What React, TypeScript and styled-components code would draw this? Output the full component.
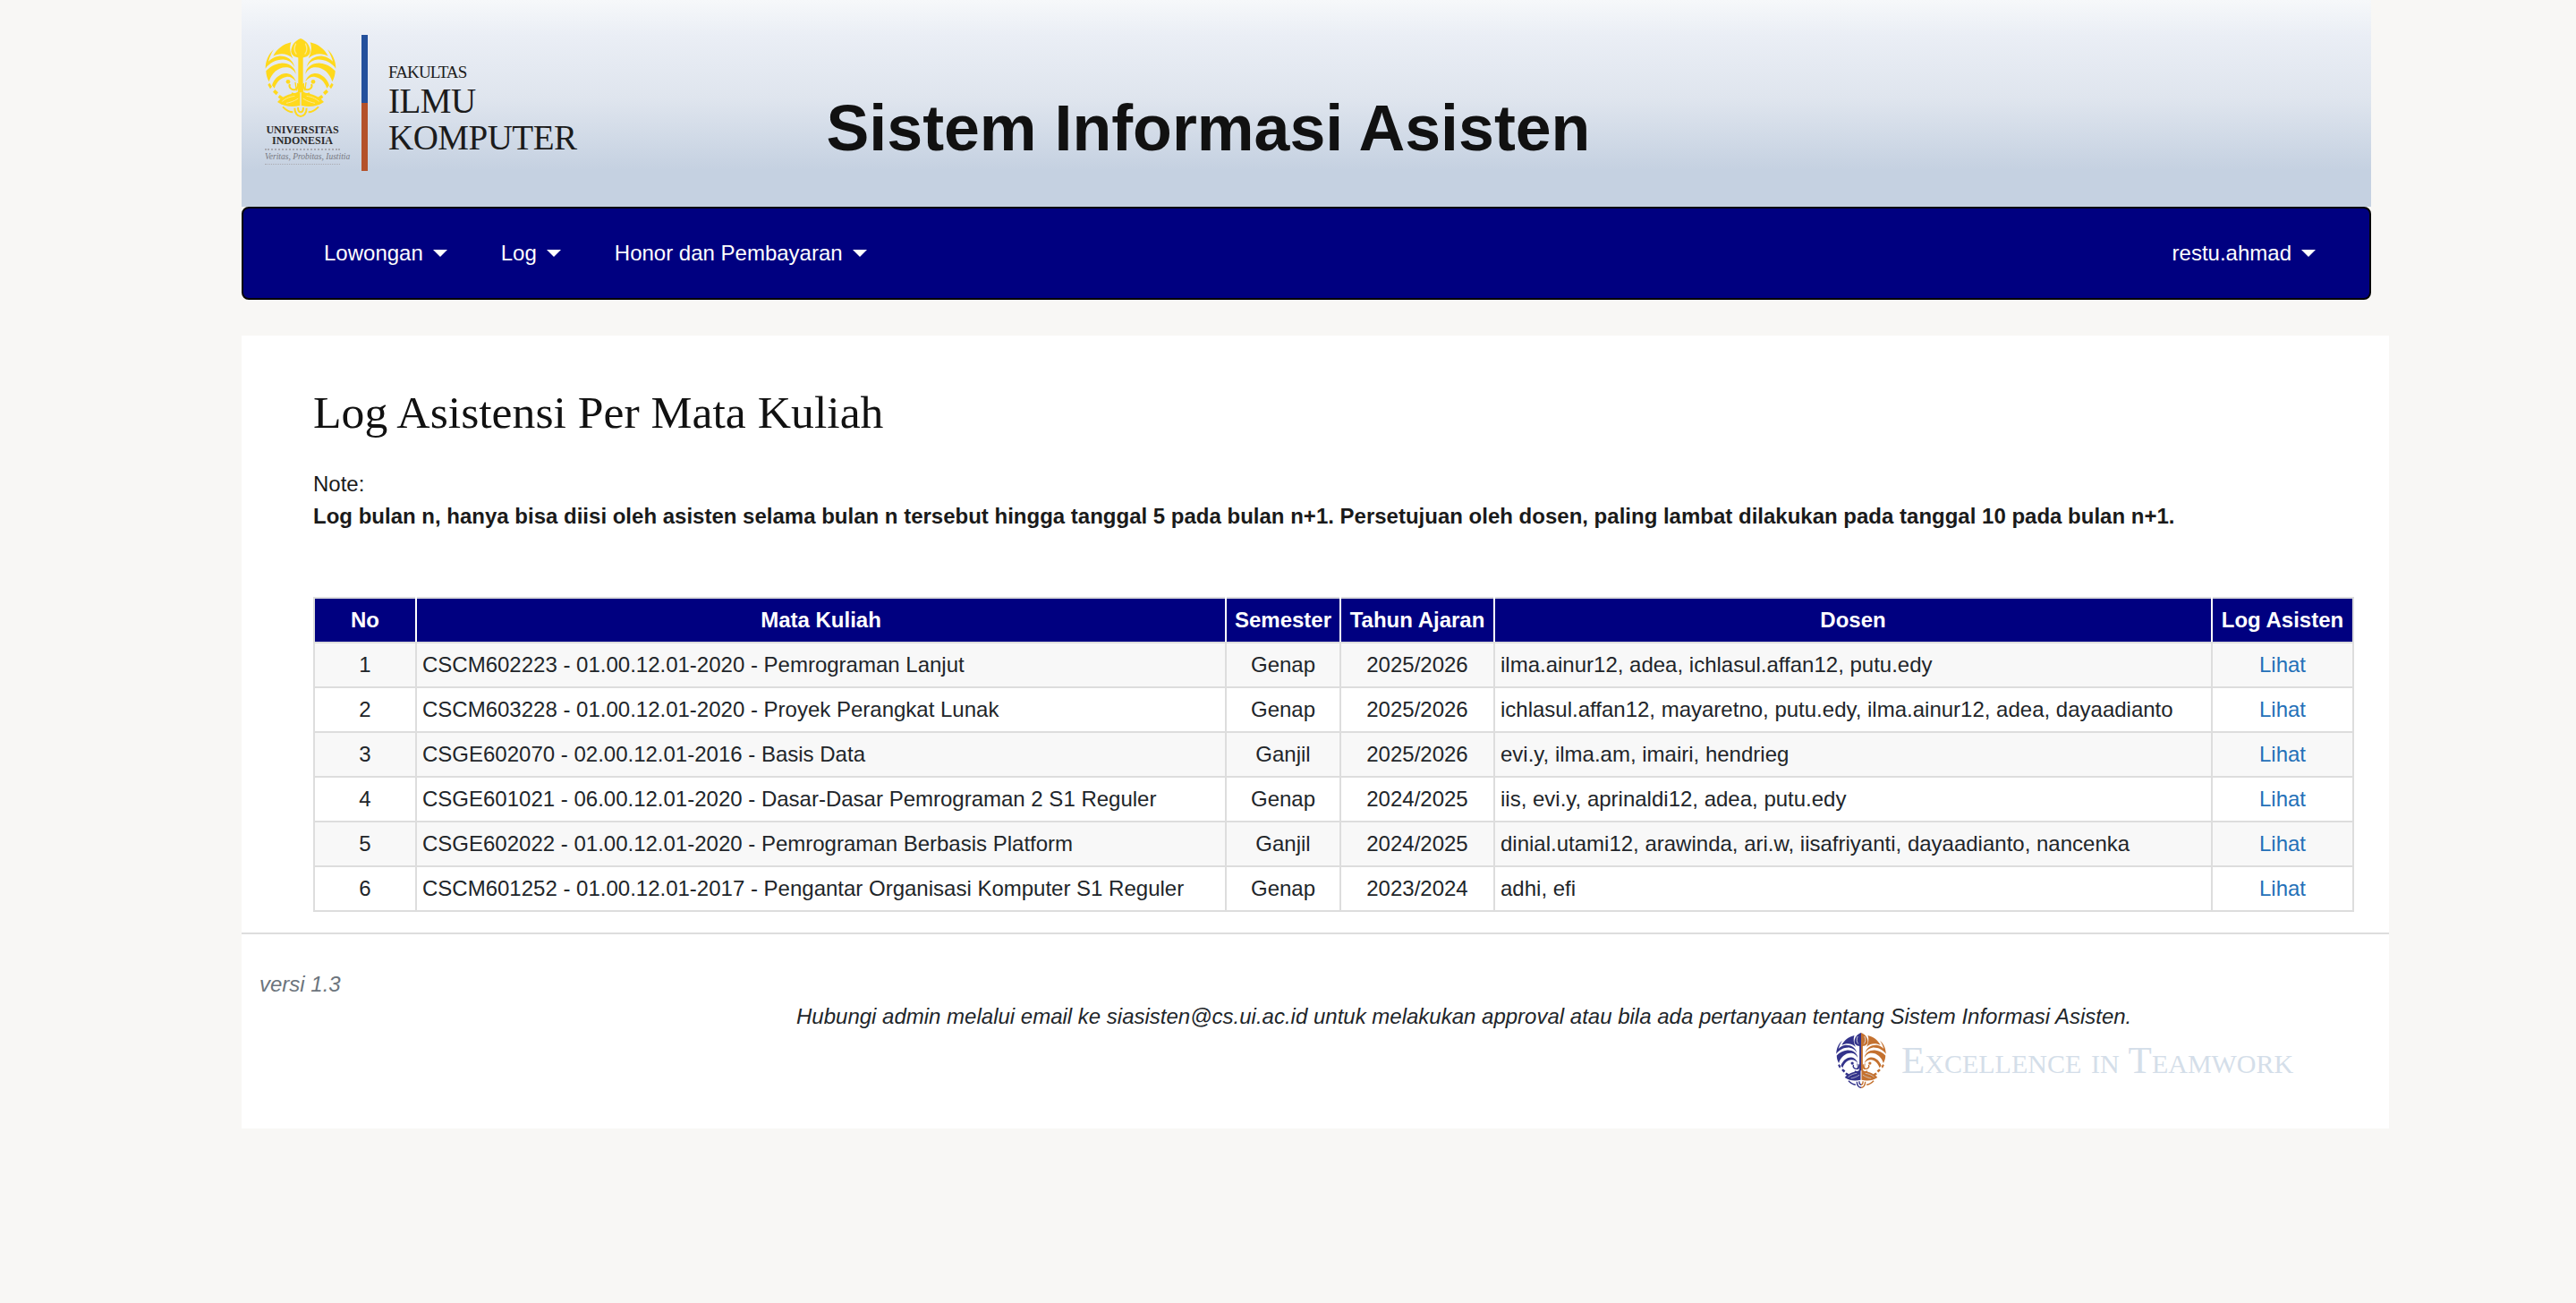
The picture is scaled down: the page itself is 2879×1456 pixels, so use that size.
import React from "react";
import styled, { createGlobalStyle } from "styled-components";

const GlobalStyle = createGlobalStyle`
  html, body {
    margin: 0;
    padding: 0;
    background: #f8f7f5;
    color: #212529;
    font-family: "Liberation Sans", Arial, sans-serif;
  }
`;

const Page = styled.div`
  min-height: 1456px;
  padding-left: 270px;
  box-sizing: border-box;
  overflow: hidden;
`;

const Banner = styled.header`
  width: 2380px;
  height: 231px;
  box-sizing: border-box;
  padding: 39px 0 0 26px;
  display: flex;
  align-items: flex-start;
  background: linear-gradient(
    to bottom,
    #f6f8fa 0,
    #eaeef5 40px,
    #dfe5ee 110px,
    #c5d1e1 190px,
    #c5d1e1 100%
  );
`;

const UniBlock = styled.div`
  width: 90px;
  padding-top: 4px;
  display: flex;
  flex-direction: column;
  align-items: flex-start;
  font-family: "Liberation Serif", serif;
`;

const UniName = styled.div`
  width: 84px;
  margin-top: 8px;
  text-align: center;
  font-size: 12px;
  line-height: 12px;
  font-weight: 700;
  color: #2b2b2b;
`;

const Motto = styled.div`
  width: 84px;
  margin-top: 3px;
  padding: 2px 0;
  border-top: 2px dotted #a9a9b0;
  border-bottom: 1px dotted #a9a9b0;
  text-align: center;
  font-size: 9.5px;
  line-height: 11px;
  font-style: italic;
  white-space: nowrap;
  color: #77777f;
`;

const Divider = styled.div`
  width: 7px;
  height: 152px;
  margin-left: 18px;
  background: linear-gradient(to bottom, #23509c 0, #23509c 50%, #b4512a 50%, #b4512a 100%);
`;

const Faculty = styled.div`
  margin-left: 23px;
  padding-top: 30px;
  font-family: "Liberation Serif", serif;
  color: #1b1b1b;
`;

const FacultySmall = styled.div`
  font-size: 19px;
  line-height: 24px;
  letter-spacing: -0.9px;
`;

const FacultyBig = styled.div`
  font-size: 39px;
  line-height: 40px;
  letter-spacing: -0.5px;
  & + & {
    margin-top: 1px;
  }
`;

const AppTitle = styled.h1`
  margin: 64px 0 0 279px;
  font-size: 71.7px;
  line-height: 80px;
  font-weight: 700;
  white-space: nowrap;
  color: #111;
`;

const Navbar = styled.nav`
  width: 2380px;
  height: 104px;
  box-sizing: border-box;
  padding: 0 60px 0 90px;
  display: flex;
  align-items: center;
  justify-content: space-between;
  background: #000080;
  border: 2px solid #050508;
  border-radius: 8px;
  color: #fff;
  font-size: 24px;
`;

const NavGroup = styled.div`
  display: flex;
  align-items: center;
  gap: 60px;
`;

const NavItem = styled.a`
  display: flex;
  align-items: center;
  gap: 11px;
  white-space: nowrap;
`;

const Caret = styled.span`
  width: 0;
  height: 0;
  border-left: 8px solid transparent;
  border-right: 8px solid transparent;
  border-top: 8px solid #fff;
`;

const Main = styled.main`
  width: 2400px;
  height: 886px;
  margin-top: 40px;
  background: #fff;
`;

const Content = styled.section`
  padding: 0 40px 0 80px;
`;

const Heading = styled.h2`
  margin: 0;
  padding-top: 56px;
  font-family: "Liberation Serif", serif;
  font-size: 51.7px;
  line-height: 60px;
  font-weight: 400;
  white-space: nowrap;
  color: #111;
`;

const Note = styled.div`
  margin-top: 32px;
  font-size: 24px;
  line-height: 36px;
  color: #1a1a1a;
`;

const NoteStrong = styled.div`
  font-weight: 700;
  white-space: nowrap;
`;

const Table = styled.table`
  width: 2279px;
  margin-top: 72px;
  table-layout: fixed;
  border-collapse: collapse;
  font-size: 24px;
`;

const Th = styled.th`
  height: 50px;
  padding: 0;
  box-sizing: border-box;
  background: #000080;
  color: #fff;
  font-weight: 700;
  white-space: nowrap;
  border: 2px solid #fff;
  border-top-color: #ddd;
  border-bottom-color: #ddd;
  &:first-child {
    border-left-color: #ddd;
  }
  &:last-child {
    border-right-color: #ddd;
  }
`;

const Tr = styled.tr`
  &:nth-child(odd) {
    background: #f8f8f8;
  }
`;

const Td = styled.td<{ $center?: boolean }>`
  height: 50px;
  padding: 0 6px;
  box-sizing: border-box;
  border: 2px solid #ddd;
  white-space: nowrap;
  color: #212529;
  text-align: ${(p) => (p.$center ? "center" : "left")};
`;

const LogLink = styled.a`
  color: #2470b8;
  text-decoration: none;
`;

const Rule = styled.hr`
  height: 2px;
  margin: 23px 0 0;
  border: 0;
  background: #ddd;
`;

const Version = styled.div`
  margin: 42px 0 0 20px;
  font-size: 24px;
  line-height: 28px;
  font-style: italic;
  color: #6c757d;
`;

const Contact = styled.div`
  margin: 8px 0 0 620px;
  font-size: 24px;
  line-height: 28px;
  font-style: italic;
  white-space: nowrap;
  color: #212529;
`;

const Motto2 = styled.div`
  margin: 4px 0 0 1780px;
  display: flex;
  align-items: center;
  gap: 15px;
`;

const Excellence = styled.span`
  font-family: "Liberation Serif", serif;
  font-size: 43px;
  line-height: 50px;
  font-variant: small-caps;
  white-space: nowrap;
  color: #d4dee9;
`;

interface MakaraProps {
  width: number;
  height: number;
  left: string;
  right: string;
  accent: string;
}

// half of the emblem, the other half is this one mirrored around x=138
const MakaraHalf: React.FC<{ color: string; accent: string; mirrored?: boolean }> = ({ color, accent, mirrored }) => (
  <g transform={mirrored ? "translate(276 0) scale(-1 1)" : undefined} fill={color}>
    <path d="M106 28 C80 34 58 50 46 74 C64 64 92 62 112 82 C102 62 100 46 106 28Z" />
    <path d="M48 52 C30 68 20 90 20 116 C34 96 58 84 84 86 C100 88 112 98 118 112 C112 84 88 72 64 74 C50 76 38 84 30 92 C34 78 40 64 48 52Z" />
    <path d="M22 124 C22 136 26 150 32 160 C40 130 66 108 94 112 C106 114 116 122 122 134 C120 110 96 96 72 98 C52 100 34 110 22 124Z" />
    <path d="M42 172 C48 150 70 130 92 132 C108 134 118 146 122 160 C114 148 102 142 90 144 C74 146 58 158 50 182Z" />
    <path d="M52 186 L63 196 L56 205 L45 194Z" />
    <path d="M68 204 L80 212 L72 220 L62 212Z" />
    <path d="M34 164 L42 176 L36 184 L28 170Z" />
    <circle cx="96" cy="160" r="7" />
    <path
      d="M130 168 C128 190 112 190 104 182 C100 178 100 172 102 168 M108 198 C118 204 128 202 134 190"
      fill="none"
      stroke={color}
      strokeWidth="6"
    />
    <path d="M60 228 C78 206 110 198 136 196 L136 240 C110 246 82 244 60 228Z" />
    <path d="M76 226 C90 214 104 210 118 208 M90 232 C100 230 116 226 130 216" fill="none" stroke={accent} strokeWidth="3" />
    <path
      d="M118 248 C118 266 128 276 138 276 M129 246 C129 256 132 262 138 262 M78 244 C90 256 102 262 112 262"
      fill="none"
      stroke={color}
      strokeWidth="6"
    />
    <path d="M138 15 C118 22 106 40 106 58 C106 72 120 80 138 80Z" />
    <path d="M122 32 C116 44 116 58 124 68" fill="none" stroke={accent} strokeWidth="4" />
    <rect x="130" y="78" width="8" height="118" />
    <path d="M120 162 L124 190 M128 165 L130 190" fill="none" stroke={color} strokeWidth="4" />
  </g>
);

const Makara: React.FC<MakaraProps> = ({ width, height, left, right, accent }) => (
  <svg width={width} height={height} viewBox="18 15 240 264">
    <MakaraHalf color={left} accent={accent} />
    <MakaraHalf color={right} accent={accent} mirrored />
  </svg>
);

const courses = [
  ["CSCM602223 - 01.00.12.01-2020 - Pemrograman Lanjut", "Genap", "2025/2026", "ilma.ainur12, adea, ichlasul.affan12, putu.edy"],
  ["CSCM603228 - 01.00.12.01-2020 - Proyek Perangkat Lunak", "Genap", "2025/2026", "ichlasul.affan12, mayaretno, putu.edy, ilma.ainur12, adea, dayaadianto"],
  ["CSGE602070 - 02.00.12.01-2016 - Basis Data", "Ganjil", "2025/2026", "evi.y, ilma.am, imairi, hendrieg"],
  ["CSGE601021 - 06.00.12.01-2020 - Dasar-Dasar Pemrograman 2 S1 Reguler", "Genap", "2024/2025", "iis, evi.y, aprinaldi12, adea, putu.edy"],
  ["CSGE602022 - 01.00.12.01-2020 - Pemrograman Berbasis Platform", "Ganjil", "2024/2025", "dinial.utami12, arawinda, ari.w, iisafriyanti, dayaadianto, nancenka"],
  ["CSCM601252 - 01.00.12.01-2017 - Pengantar Organisasi Komputer S1 Reguler", "Genap", "2023/2024", "adhi, efi"],
];

const columns = [114, 905, 128, 172, 802, 158];
const headers = ["No", "Mata Kuliah", "Semester", "Tahun Ajaran", "Dosen", "Log Asisten"];

const App: React.FC = () => (
  <Page>
    <GlobalStyle />
    <Banner>
      <UniBlock>
        <Makara width={80} height={88} left="#ffd91c" right="#ffd91c" accent="#fbe98f" />
        <UniName>
          UNIVERSITAS
          <br />
          INDONESIA
        </UniName>
        <Motto>Veritas, Probitas, Iustitia</Motto>
      </UniBlock>
      <Divider />
      <Faculty>
        <FacultySmall>FAKULTAS</FacultySmall>
        <FacultyBig>ILMU</FacultyBig>
        <FacultyBig>KOMPUTER</FacultyBig>
      </Faculty>
      <AppTitle>Sistem Informasi Asisten</AppTitle>
    </Banner>
    <Navbar>
      <NavGroup>
        <NavItem>Lowongan <Caret /></NavItem>
        <NavItem>Log <Caret /></NavItem>
        <NavItem>Honor dan Pembayaran <Caret /></NavItem>
      </NavGroup>
      <NavItem>restu.ahmad <Caret /></NavItem>
    </Navbar>
    <Main>
      <Content>
        <Heading>Log Asistensi Per Mata Kuliah</Heading>
        <Note>
          Note:
          <NoteStrong>
            Log bulan n, hanya bisa diisi oleh asisten selama bulan n tersebut hingga tanggal 5 pada bulan n+1. Persetujuan oleh dosen, paling lambat dilakukan pada tanggal 10 pada bulan n+1.
          </NoteStrong>
        </Note>
        <Table>
          <colgroup>
            {columns.map((w, i) => (
              <col key={i} width={w} />
            ))}
          </colgroup>
          <thead>
            <tr>
              {headers.map((h) => (
                <Th key={h}>{h}</Th>
              ))}
            </tr>
          </thead>
          <tbody>
            {courses.map((c, i) => (
              <Tr key={c[0]}>
                <Td $center>{i + 1}</Td>
                <Td>{c[0]}</Td>
                <Td $center>{c[1]}</Td>
                <Td $center>{c[2]}</Td>
                <Td>{c[3]}</Td>
                <Td $center>
                  <LogLink href="#">Lihat</LogLink>
                </Td>
              </Tr>
            ))}
          </tbody>
        </Table>
      </Content>
      <Rule />
      <Version>versi 1.3</Version>
      <Contact>
        Hubungi admin melalui email ke siasisten@cs.ui.ac.id untuk melakukan approval atau bila ada pertanyaan tentang Sistem Informasi Asisten.
      </Contact>
      <Motto2>
        <Makara width={60} height={62} left="#33338a" right="#c4712f" accent="#d8d8e0" />
        <Excellence>Excellence in Teamwork</Excellence>
      </Motto2>
    </Main>
  </Page>
);

export default App;
